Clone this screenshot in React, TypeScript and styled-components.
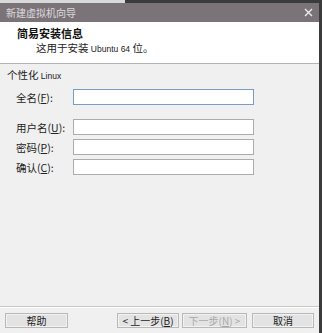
import React from "react";
import styled, { createGlobalStyle } from "styled-components";

const Global = createGlobalStyle`
  html, body { margin: 0; padding: 0; background: #f0f0f0; }
  body { font-family: "Noto Sans CJK SC", "Liberation Sans", sans-serif; }
`;

const Page = styled.div`
  width: 322px;
  height: 333px;
  display: flex;
  flex-direction: column;
  overflow: hidden;
`;

const TopStrip = styled.div`
  height: 3px;
  display: flex;
`;

const StripPart = styled.div<{ $light?: boolean; $w?: number }>`
  ${({ $w }) => ($w ? `width: ${$w}px;` : "flex: 1;")}
  background: ${({ $light }) => ($light ? "#d9d9d9" : "#3b3b3b")};
`;

const Main = styled.div`
  flex: 1;
  display: flex;
`;

const Window = styled.div`
  flex: 1;
  display: flex;
  flex-direction: column;
  background: #f0f0f0;
`;

const RightEdge = styled.div`
  width: 3px;
  background: #3b3b3b;
`;

const TitleBar = styled.div`
  height: 19px;
  background: #7a7479;
  display: flex;
  align-items: center;
  justify-content: space-between;
  padding: 0 6px 0 6px;
  color: #ded8dc;
  font-size: 10px;
`;

const Close = styled.div`
  width: 10px;
  height: 10px;
  display: flex;
  align-items: center;
  justify-content: center;
`;

const Header = styled.div`
  height: 42px;
  background: #ffffff;
  border-bottom: 1px solid #b4b4b4;
  box-sizing: border-box;
  padding: 4px 0 0 17px;
  display: flex;
  flex-direction: column;
`;

const HeaderTitle = styled.div`
  font-size: 11px;
  font-weight: bold;
  color: #111;
  line-height: 15px;
`;

const HeaderSub = styled.div`
  font-size: 10.5px;
  color: #222;
  line-height: 14px;
  padding-left: 19px;
`;

const Body = styled.div`
  flex: 1;
  padding: 4px 0 0 7px;
  display: flex;
  flex-direction: column;
`;

const Group = styled.div`
  font-size: 10.5px;
  color: #222;
  line-height: 14px;
`;

const Latin = styled.span`
  font-family: "Liberation Sans", sans-serif;
  font-size: 8.5px;
`;

const Form = styled.div`
  display: grid;
  grid-template-columns: 57px 181px;
  row-gap: 4px;
  padding: 6px 0 0 9px;
`;

const Label = styled.label<{ $gap?: number }>`
  font-size: 10.5px;
  color: #222;
  display: flex;
  align-items: center;
  height: 16px;
  margin-top: ${({ $gap }) => $gap || 0}px;
`;

const Input = styled.div<{ $focus?: boolean; $gap?: number }>`
  height: 16px;
  box-sizing: border-box;
  background: #ffffff;
  border: 1px solid ${({ $focus }) => ($focus ? "#7a9cc4" : "#acacac")};
  margin-top: ${({ $gap }) => $gap || 0}px;
`;

const Footer = styled.div`
  border-top: 1px solid #c8c8c8;
  box-shadow: inset 0 1px 0 #ffffff;
  height: 27px;
  box-sizing: border-box;
  display: flex;
  padding: 6px 0 0 5px;
`;

const Button = styled.div<{ $w: number; $ml?: number; $disabled?: boolean }>`
  width: ${({ $w }) => $w}px;
  height: 15px;
  margin-left: ${({ $ml }) => $ml || 0}px;
  box-sizing: border-box;
  border: 1px solid #b8b8b8;
  background: #e3e3e3;
  box-shadow: inset 0 0 0 1px #f2f2f2;
  display: flex;
  align-items: center;
  justify-content: center;
  font-size: 10px;
  color: ${({ $disabled }) => ($disabled ? "#a8a8a8" : "#222")};
`;

const U = styled.span`
  text-decoration: underline;
`;

export default function App() {
  return (
    <Page>
      <Global />
      <TopStrip>
        <StripPart $light $w={125} />
        <StripPart />
      </TopStrip>
      <Main>
        <Window>
          <TitleBar>
            <span>新建虚拟机向导</span>
            <Close>
              <svg width="9" height="9" viewBox="0 0 9 9">
                <path d="M1 1L8 8M8 1L1 8" stroke="#eeeaec" strokeWidth="1.4" />
              </svg>
            </Close>
          </TitleBar>
          <Header>
            <HeaderTitle>简易安装信息</HeaderTitle>
            <HeaderSub>
              这用于安装 <Latin>Ubuntu 64</Latin> 位。
            </HeaderSub>
          </Header>
          <Body>
            <Group>
              个性化 <Latin>Linux</Latin>
            </Group>
            <Form>
              <Label>
                全名(<U>F</U>):
              </Label>
              <Input $focus />
              <Label $gap={10}>
                用户名(<U>U</U>):
              </Label>
              <Input $gap={10} />
              <Label>
                密码(<U>P</U>):
              </Label>
              <Input />
              <Label>
                确认(<U>C</U>):
              </Label>
              <Input />
            </Form>
          </Body>
          <Footer>
            <Button $w={63}>帮助</Button>
            <Button $w={62} $ml={49}>
              &lt; 上一步(<U>B</U>)
            </Button>
            <Button $w={65} $ml={3} $disabled>
              下一步(<U>N</U>) &gt;
            </Button>
            <Button $w={62} $ml={5}>
              取消
            </Button>
          </Footer>
        </Window>
        <RightEdge />
      </Main>
    </Page>
  );
}
